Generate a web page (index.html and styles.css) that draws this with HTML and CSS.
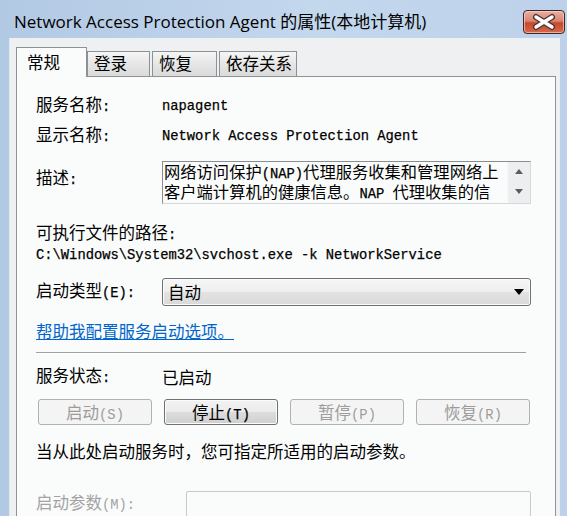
FILE: index.html
```html
<!DOCTYPE html>
<html>
<head>
<meta charset="utf-8">
<title>Network Access Protection Agent 的属性(本地计算机)</title>
<link rel="stylesheet" href="styles.css">
</head>
<body>

<div id="window">

	<div id="titlebar">
		<span id="title">Network Access Protection Agent 的属性(本地计算机)</span>
		<button id="close">
			<svg width="40" height="22" viewBox="0 0 40 22">
				<path d="M12 6 L28 16 M28 6 L12 16" stroke="#4a3434" stroke-width="6" stroke-linecap="round"/>
				<path d="M12 6 L28 16 M28 6 L12 16" stroke="#fff" stroke-width="3.4" stroke-linecap="round"/>
			</svg>
		</button>
	</div>

	<div id="dialog">
		<div id="tabs">
			<div class="tab selected">常规</div>
			<div class="tab">登录</div>
			<div class="tab">恢复</div>
			<div class="tab">依存关系</div>
		</div>

		<div id="page">
			<div class="row" id="r-name">
				<label>服务名称<span class="mono">:</span></label>
				<span class="mono value">napagent</span>
			</div>
			<div class="row" id="r-display">
				<label>显示名称<span class="mono">:</span></label>
				<span class="mono value">Network Access Protection Agent</span>
			</div>
			<div class="row" id="r-desc">
				<label>描述<span class="mono">:</span></label>
				<div class="descbox">
					<div class="desctext">
						<div>网络访问保护<span class="mono">(NAP)</span>代理服务收集和管理网络上</div>
						<div>客户端计算机的健康信息。<span class="mono">NAP </span>代理收集的信</div>
					</div>
					<div class="scroll">
						<svg width="8" height="5" viewBox="0 0 8 5"><polygon points="0,5 8,5 4,0" fill="#5c5c5c"/></svg>
						<svg width="8" height="5" viewBox="0 0 8 5"><polygon points="0,0 8,0 4,5" fill="#5c5c5c"/></svg>
					</div>
				</div>
			</div>

			<div id="pathlabel">可执行文件的路径<span class="mono">:</span></div>
			<div id="path" class="mono">C:\Windows\System32\svchost.exe -k NetworkService</div>

			<div class="row" id="r-startup">
				<label>启动类型<span class="mono">(E):</span></label>
				<div class="combo">
					<span>自动</span>
					<svg width="10" height="6" viewBox="0 0 10 6"><polygon points="0,0 10,0 5,6" fill="#000"/></svg>
				</div>
			</div>

			<a class="link" href="#">帮助我配置服务启动选项。</a>

			<div class="sep"></div>

			<div class="row" id="r-status">
				<label>服务状态<span class="mono">:</span></label>
				<span>已启动</span>
			</div>

			<div class="buttons">
				<button class="btn" disabled>启动<span class="mono">(S)</span></button>
				<button class="btn active">停止<span class="mono">(T)</span></button>
				<button class="btn" disabled>暂停<span class="mono">(P)</span></button>
				<button class="btn" disabled>恢复<span class="mono">(R)</span></button>
			</div>

			<div class="note">当从此处启动服务时，您可指定所适用的启动参数。</div>

			<div class="row" id="r-params">
				<label>启动参数<span class="mono">(M):</span></label>
				<div class="field"></div>
			</div>
		</div>
	</div>

</div>

</body>
</html>
```

FILE: styles.css
```css
* {
	box-sizing: border-box;
}

body {
	margin: 0;
	font-family: "Noto Sans CJK SC", sans-serif;
	font-size: 16.5px;
	color: #000;
}

.mono {
	font-family: "Liberation Mono", "Noto Sans CJK SC", monospace;
	font-size: 13.8px;
	-webkit-text-stroke: 0.25px #000;
}

#window {
	width: 567px;
	height: 516px;
	overflow: hidden;
	display: flex;
	flex-direction: column;
	background: linear-gradient(to right, #b2c9e4, #c3d7ed 55%, #bdd2ea);
}

/* title bar */

#titlebar {
	height: 38px;
	flex: none;
	display: flex;
	justify-content: space-between;
	align-items: flex-start;
	padding: 0 2px 0 14px;
}

#title {
	font-family: "Open Sans", "Noto Sans CJK SC", sans-serif;
	font-size: 17px;
	line-height: 20px;
	margin-top: 12px;
}

#close {
	margin-top: 10px;
	width: 42px;
	height: 24px;
	padding: 0;
	border: 1px solid #3f2424;
	border-radius: 4px;
	background: linear-gradient(#eab0a2, #d98470 45%, #c7472d 55%, #d66a4e);
	box-shadow: inset 0 0 0 1px rgba(255, 220, 210, 0.6);
	display: flex;
	align-items: center;
	justify-content: center;
}

/* dialog body */

#dialog {
	flex: 1;
	display: flex;
	flex-direction: column;
	margin: 0 7px 0 9px;
	padding: 9px 4px 0 6px;
	background: #eef0f2;
	border-left: 1px solid #e0e9f3;
}

#tabs {
	height: 29px;
	flex: none;
	display: flex;
	align-items: flex-end;
}

.tab {
	height: 25px;
	margin-left: 2px;
	padding-left: 6px;
	line-height: 23px;
	border: 1px solid #8c9196;
	border-bottom: 0;
	background: linear-gradient(#f5f5f5, #e6e6e6 50%, #dadada);
}

.tab:nth-child(2) {
	width: 63px;
	margin-left: 0;
}

.tab:nth-child(3) {
	width: 65px;
}

.tab:nth-child(4) {
	width: 78px;
}

.tab.selected {
	position: relative;
	z-index: 1;
	width: 71px;
	height: 30px;
	margin: 0 0 -1px 0;
	padding: 4px 0 0 10px;
	line-height: 20px;
	background: #fafcfb;
}

#page {
	flex: 1;
	display: flex;
	flex-direction: column;
	padding: 19px 24px 0 19px;
	background: #fafcfb;
	border: 1px solid #8e9398;
}

.row {
	display: flex;
	align-items: center;
	height: 20px;
	flex: none;
}

.row label {
	width: 126px;
	flex: none;
	line-height: 20px;
}

#r-display {
	margin-top: 10px;
}

#r-desc {
	margin-top: 15px;
	height: 43px;
	align-items: flex-start;
}

#r-desc label {
	margin-top: 6px;
}

.descbox {
	flex: 1;
	height: 43px;
	display: flex;
	border: 1px solid;
	border-color: #8a8d91 #d6d9dc #d6d9dc #8a8d91;
}

.desctext {
	flex: 1;
	white-space: nowrap;
	font-size: 16.3px;
	line-height: 17px;
	padding: 1px 0 0 1px;
}

.scroll {
	width: 23px;
	flex: none;
	display: flex;
	flex-direction: column;
	align-items: center;
	justify-content: space-between;
	padding: 7px 0 9px;
	background: #eceeef;
	border-left: 1px solid #f7f7f7;
}

#pathlabel {
	margin-top: 18px;
	line-height: 20px;
}

#path {
	line-height: 20px;
}

#r-startup {
	margin-top: 12px;
	height: 28px;
}

.combo {
	flex: 1;
	height: 28px;
	display: flex;
	align-items: center;
	justify-content: space-between;
	padding: 0 6px 0 5px;
	border: 1px solid #707070;
	border-radius: 3px;
	background: linear-gradient(#f6f6f6, #eeeeee 50%, #e3e3e3 50%, #d9d9d9);
	box-shadow: inset 0 0 0 1px #fbfbfb;
}

.link {
	margin-top: 15px;
	align-self: flex-start;
	line-height: 20px;
	color: #0066cc;
	text-decoration: underline;
}

.sep {
	height: 2px;
	margin: 11px 5px 0 0;
	border-top: 1px solid #a0a0a0;
	border-bottom: 1px solid #fff;
}

#r-status {
	margin-top: 13px;
}

.buttons {
	display: flex;
	gap: 12px;
	margin-top: 12px;
	padding-left: 2px;
}

.btn {
	width: 114px;
	height: 26px;
	padding: 0;
	font-family: "Noto Sans CJK SC", sans-serif;
	font-size: 16.5px;
	color: #9c9c9c;
	border: 1px solid #adb2b5;
	border-radius: 3px;
	background: #f4f4f4;
}

.btn .mono {
	-webkit-text-stroke: 0;
}

.btn.active {
	color: #000;
	border-color: #707070;
	background: linear-gradient(#f2f2f2, #ebebeb 50%, #dddddd 50%, #cfcfcf);
	box-shadow: inset 0 0 0 1px #fcfcfc;
}

.btn.active .mono {
	-webkit-text-stroke: 0.25px #000;
}

.note {
	margin-top: 16px;
	line-height: 20px;
}

#r-params {
	margin-top: 30px;
	height: 26px;
}

#r-params label {
	width: 150px;
	color: #a3a3a3;
}

#r-params .mono {
	-webkit-text-stroke: 0;
}

.field {
	flex: 1;
	height: 26px;
	border: 1px solid #c7c9cc;
	border-radius: 2px;
	background: #fafcfb;
}
```
